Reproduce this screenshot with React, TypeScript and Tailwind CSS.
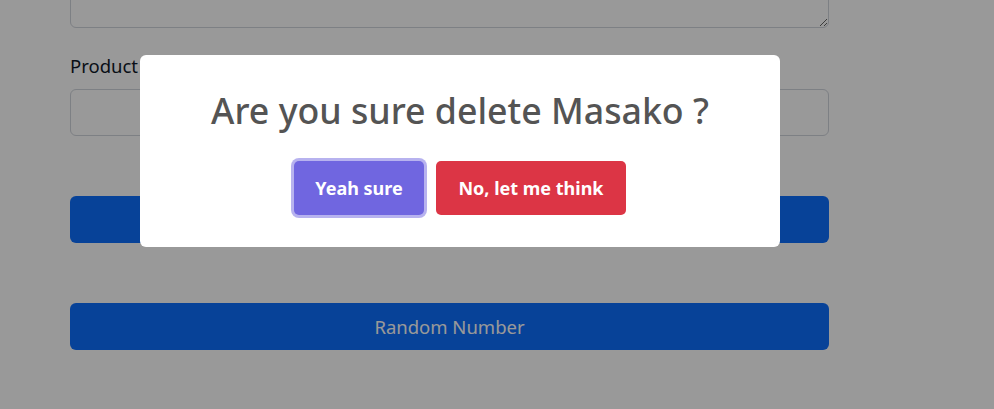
import React from 'react'

export default function App() {
  return (
    <div className="relative h-[409px] w-[994px] overflow-hidden bg-white font-['Noto_Sans',sans-serif]">
      <div className="ml-[70px] flex w-[759px] flex-col">
        <textarea className="-mt-[62px] h-[90px] w-full rounded-md border border-gray-300" />
        <label className="mt-[26px] text-[18.5px] leading-6 text-gray-900">Product</label>
        <input className="mt-[11px] h-[47px] w-full rounded-md border border-gray-300" />
        <button className="mt-[60px] h-[47px] w-full rounded-md bg-[#0d6efd] text-[18.5px] text-white" />
        <button className="mt-[60px] h-[47px] w-full rounded-md bg-[#0d6efd] text-[18.5px] text-white">
          Random Number
        </button>
      </div>

      <div className="absolute inset-0 bg-black/40">
        <div className="absolute left-[140px] top-[55px] flex h-[192px] w-[640px] flex-col items-center rounded-md bg-white">
          <h2 className="mt-[32px] text-[35.7px] font-medium leading-[46px] text-[#545454]">
            Are you sure delete Masako ?
          </h2>
          <div className="mt-[28px] flex gap-3">
            <button className="h-[54px] w-[130px] rounded-[5px] bg-[#7066e0] text-[18px] font-bold text-white shadow-[0_0_0_3px_rgba(112,102,224,0.5)]">
              Yeah sure
            </button>
            <button className="h-[54px] w-[190px] rounded-[5px] bg-[#dc3545] text-[18px] font-bold text-white">
              No, let me think
            </button>
          </div>
        </div>
      </div>
    </div>
  )
}
